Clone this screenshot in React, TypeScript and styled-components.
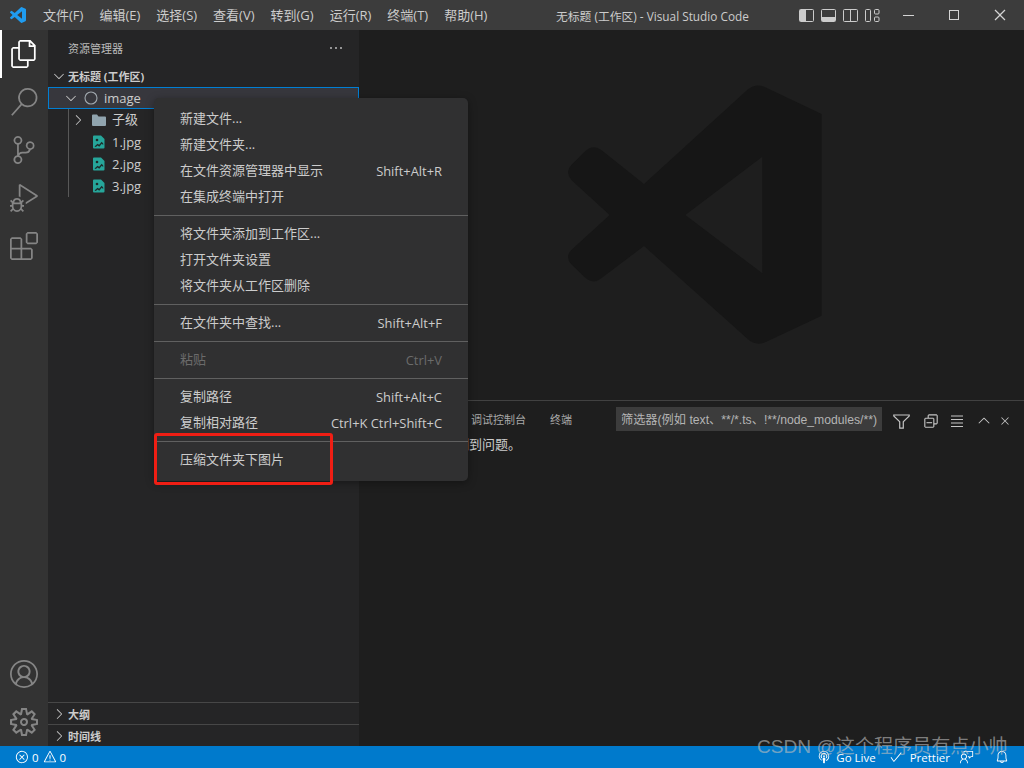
import React from "react";
import styled, { createGlobalStyle } from "styled-components";
import {
  VscAccount,
  VscBell,
  VscBroadcast,
  VscCheck,
  VscChevronDown,
  VscChevronRight,
  VscChevronUp,
  VscChromeClose,
  VscChromeMaximize,
  VscChromeMinimize,
  VscClose,
  VscCollapseAll,
  VscDebugAlt,
  VscEllipsis,
  VscError,
  VscExtensions,
  VscFeedback,
  VscFiles,
  VscFilter,
  VscSearch,
  VscSettingsGear,
  VscSourceControl,
  VscWarning,
} from "react-icons/vsc";

const FONT = `"Open Sans", "Noto Sans CJK SC", sans-serif`;

const Global = createGlobalStyle`
  html, body { margin: 0; padding: 0; height: 100%; background: #1e1e1e; }
  #root { height: 100%; }
  * { box-sizing: border-box; }
`;

const Window = styled.div`
  position: relative;
  width: 1024px;
  height: 768px;
  display: flex;
  flex-direction: column;
  overflow: hidden;
  font-family: ${FONT};
  font-size: 13px;
  color: #cccccc;
`;

const TitleBar = styled.header`
  height: 30px;
  flex: none;
  display: flex;
  align-items: center;
  background: #3c3c3c;
`;

const AppLogo = styled.svg`
  width: 16px;
  height: 16px;
  margin: 0 17px 0 10px;
  flex: none;
`;

const MenuBar = styled.nav`
  width: 513px;
  display: flex;
  gap: 16px;
  flex: none;
`;

const MenuLabel = styled.span`
  font-size: 13px;
  line-height: 30px;
  white-space: nowrap;
`;

const WindowTitle = styled.div`
  width: 243px;
  flex: none;
  font-size: 11.8px;
  white-space: nowrap;
  color: #cccccc;
`;

const LayoutIcons = styled.div`
  display: flex;
  gap: 7px;
  width: 86px;
  flex: none;
`;

const WinControls = styled.div`
  display: flex;
  align-items: center;
  flex: none;
  width: 139px;
  color: #d4d4d4;
`;

const WinButton = styled.span`
  width: 46px;
  display: flex;
  justify-content: center;
  font-size: 16px;
`;

const Main = styled.div`
  flex: 1;
  display: flex;
  min-height: 0;
`;

const ActivityBar = styled.aside`
  width: 48px;
  flex: none;
  display: flex;
  flex-direction: column;
  background: #333333;
`;

const ActivityItem = styled.div<{ $active?: boolean }>`
  height: 48px;
  display: flex;
  align-items: center;
  justify-content: center;
  font-size: 28px;
  color: ${(p) => (p.$active ? "#ffffff" : "#858585")};
  border-left: 2px solid ${(p) => (p.$active ? "#ffffff" : "transparent")};
  padding-right: 2px;
`;

const ActivitySpacer = styled.div`
  flex: 1;
`;

const SideBar = styled.aside`
  width: 311px;
  flex: none;
  display: flex;
  flex-direction: column;
  background: #252526;
`;

const SideHeader = styled.div`
  height: 35px;
  flex: none;
  display: flex;
  align-items: center;
  justify-content: space-between;
  padding: 0 15px 0 20px;
  font-size: 11px;
  color: #bbbbbb;
`;

const SectionHeader = styled.div<{ $ruled?: boolean }>`
  height: 22px;
  flex: none;
  display: flex;
  align-items: center;
  gap: 1px;
  padding-left: 3px;
  font-size: 11px;
  font-weight: 700;
  color: #cccccc;
  border-top: ${(p) => (p.$ruled ? "1px solid #474747" : "none")};
`;

const Tree = styled.div`
  position: relative;
  flex: 1;
`;

const TreeRow = styled.div<{ $depth: number; $selected?: boolean }>`
  height: 22px;
  display: flex;
  align-items: center;
  gap: 5px;
  padding-left: ${(p) => p.$depth}px;
  color: #cccccc;
  background: ${(p) => (p.$selected ? "#37373d" : "transparent")};
  outline: ${(p) => (p.$selected ? "1px solid #007fd4" : "none")};
  outline-offset: -1px;
`;

const IndentGuide = styled.div`
  position: absolute;
  left: 20px;
  top: 22px;
  width: 1px;
  height: 88px;
  background: #585858;
`;

const FileName = styled.span<{ $cjk?: boolean }>`
  font-size: 13px;
  padding-bottom: ${(p) => (p.$cjk ? "4px" : "0")};
`;

const Twistie = styled.span`
  display: flex;
  font-size: 16px;
  width: 16px;
  flex: none;
  color: #c5c5c5;
`;

const WorkArea = styled.div`
  flex: 1;
  min-width: 0;
  display: flex;
  flex-direction: column;
`;

const Editor = styled.div`
  flex: 1;
  display: flex;
  align-items: center;
  justify-content: center;
  background: #1e1e1e;
  padding-left: 7px;
`;

const Watermark = styled.svg`
  width: 255px;
  height: 260px;
`;

const Panel = styled.section`
  height: 346px;
  flex: none;
  display: flex;
  flex-direction: column;
  background: #1e1e1e;
  border-top: 1px solid #414141;
`;

const PanelHeader = styled.div`
  height: 35px;
  flex: none;
  display: flex;
  align-items: center;
  padding-left: 20px;
`;

const PanelTab = styled.span`
  font-size: 11px;
  color: #a8a8a8;
  margin-right: 24px;
  white-space: nowrap;
`;

const FilterBox = styled.div`
  position: absolute;
  left: 616px;
  top: 407px;
  width: 266px;
  height: 24px;
  display: flex;
  align-items: center;
  padding-left: 5px;
  background: #3c3c3c;
  color: #b4b4b4;
  font-family: "Liberation Sans", "Noto Sans CJK SC", sans-serif;
  font-size: 12.2px;
  white-space: nowrap;
`;

const PanelActions = styled.div`
  position: absolute;
  left: 884px;
  top: 410px;
  display: flex;
  align-items: center;
  font-size: 18px;
  color: #c5c5c5;
`;

const PanelAction = styled.span<{ $w: number; $size: number }>`
  width: ${(p) => p.$w}px;
  display: flex;
  justify-content: center;
  font-size: ${(p) => p.$size}px;
`;

const PanelMessage = styled.div`
  padding-left: 19px;
  margin-top: -2px;
  font-size: 13px;
  line-height: 20px;
  color: #cccccc;
`;

const StatusBar = styled.footer`
  height: 22px;
  flex: none;
  display: flex;
  align-items: center;
  justify-content: space-between;
  padding: 0 15px 0 15px;
  background: #007acc;
  color: #ffffff;
  font-size: 11.5px;
`;

const StatusGroup = styled.div`
  display: flex;
  align-items: center;
`;

const StatusItem = styled.span<{ $gap?: number; $after?: number }>`
  display: flex;
  align-items: center;
  gap: ${(p) => p.$gap ?? 3}px;
  margin-right: ${(p) => p.$after ?? 0}px;
  white-space: nowrap;
  svg {
    font-size: 14px;
  }
`;

const ContextMenu = styled.div`
  position: absolute;
  left: 154px;
  top: 98px;
  width: 314px;
  padding: 8px 0;
  background: #303031;
  border-radius: 5px;
  box-shadow: 0 2px 8px rgba(0, 0, 0, 0.36);
`;

const Item = styled.div<{ $disabled?: boolean }>`
  height: 26px;
  display: flex;
  align-items: center;
  justify-content: space-between;
  padding: 0 26px;
  font-size: 13px;
  color: ${(p) => (p.$disabled ? "#6b6b6b" : "#cccccc")};
`;

const ItemLabel = styled.span`
  padding-bottom: 4px;
`;

const Keys = styled.span`
  font-size: 12.9px;
  white-space: nowrap;
`;

const Separator = styled.div`
  height: 1px;
  margin: 5px 0;
  background: #606060;
`;

const Callout = styled.div`
  position: absolute;
  left: 154px;
  top: 433px;
  width: 179px;
  height: 52px;
  border: 3px solid #f01e14;
  border-radius: 3px;
`;

const Credit = styled.div`
  position: absolute;
  left: 757px;
  top: 735px;
  font-family: "Liberation Sans", "Noto Sans CJK SC", sans-serif;
  font-size: 19.1px;
  line-height: 24px;
  color: rgba(190, 190, 190, 0.62);
  white-space: nowrap;
`;

const LOGO =
  "M23.15 2.587L18.21.21a1.494 1.494 0 0 0-1.705.29l-9.46 8.63-4.12-3.128a.999.999 0 0 0-1.276.057L.327 7.261A1 1 0 0 0 .326 8.74L3.899 12 .326 15.26a1 1 0 0 0 .001 1.479L1.65 17.94a.999.999 0 0 0 1.276.057l4.12-3.128 9.46 8.63a1.492 1.492 0 0 0 1.704.29l4.942-2.377A1.5 1.5 0 0 0 24 20.06V3.939a1.5 1.5 0 0 0-.85-1.352zm-5.146 14.861L10.826 12l7.178-5.448v10.896z";

const WATERMARK =
  "M625 58Q650 38 680 53L846 132V737L680 815Q650 830 625 808L313 528L185 625Q160 645 135 622L95 583Q75 560 95 540L210 435L95 330Q75 305 95 285L135 245Q160 222 185 240L313 342ZM668 260L437 435L668 610Z";

const FolderIcon = () => (
  <svg width="16" height="16" viewBox="0 0 16 16" style={{ flex: "none" }}>
    <path
      d="M1 3.5A1 1 0 0 1 2 2.5h4l1.5 2H14a1 1 0 0 1 1 1V13a1 1 0 0 1-1 1H2a1 1 0 0 1-1-1z"
      fill="#90a4ae"
    />
  </svg>
);

const ImageIcon = () => (
  <svg width="16" height="16" viewBox="0 0 16 16" style={{ flex: "none" }}>
    <path d="M3 1.5h7l3.5 3.5v8.5a1 1 0 0 1-1 1H3a1 1 0 0 1-1-1v-11a1 1 0 0 1 1-1z" fill="#26a69a" />
    <circle cx="6" cy="6" r="1.3" fill="#1d2b2a" />
    <path d="M3.5 12.5l3-2.8 1.6 1.1 2.6-3 1.5 1.6v1.7l-1.5-1.3-2.4 2.9-1.8-1.2-1.6 1.5z" fill="#1d2b2a" />
  </svg>
);

const CircleIcon = () => (
  <svg width="16" height="16" viewBox="0 0 16 16" style={{ flex: "none", margin: "0 0 0 -1px" }}>
    <circle cx="8" cy="8" r="6" fill="none" stroke="#a0a8ae" strokeWidth="1.1" />
  </svg>
);

const LayoutGlyph = ({ kind }: { kind: "left" | "bottom" | "split" | "grid" }) => (
  <svg width="15" height="15" viewBox="0 0 15 15" fill="none" stroke="#cccccc" strokeWidth="1">
    {kind === "left" && (
      <>
        <rect x="0.5" y="1.5" width="14" height="12" rx="1" />
        <rect x="1" y="2" width="6" height="11" fill="#cccccc" stroke="none" />
      </>
    )}
    {kind === "bottom" && (
      <>
        <rect x="0.5" y="1.5" width="14" height="12" rx="1" />
        <rect x="1" y="9" width="13" height="4" fill="#cccccc" stroke="none" />
      </>
    )}
    {kind === "split" && (
      <>
        <rect x="0.5" y="1.5" width="14" height="12" rx="1" />
        <path d="M7.5 2v11" />
      </>
    )}
    {kind === "grid" && (
      <>
        <rect x="0.5" y="1.5" width="5" height="12" rx="1" />
        <rect x="9.5" y="1.5" width="4.5" height="4.5" rx="1" />
        <rect x="9.5" y="9" width="4.5" height="4.5" rx="1" />
      </>
    )}
  </svg>
);

const ListLines = () => (
  <svg width="16" height="16" viewBox="0 0 16 16" fill="none" stroke="#c5c5c5" strokeWidth="1">
    <path d="M2 3h12M2 6.5h12M2 10h12M2 13.5h12" />
  </svg>
);

const menus = ["文件(F)", "编辑(E)", "选择(S)", "查看(V)", "转到(G)", "运行(R)", "终端(T)", "帮助(H)"];

type Entry = { label: string; keys?: string; disabled?: boolean };

const menuGroups: Entry[][] = [
  [
    { label: "新建文件..." },
    { label: "新建文件夹..." },
    { label: "在文件资源管理器中显示", keys: "Shift+Alt+R" },
    { label: "在集成终端中打开" },
  ],
  [
    { label: "将文件夹添加到工作区..." },
    { label: "打开文件夹设置" },
    { label: "将文件夹从工作区删除" },
  ],
  [{ label: "在文件夹中查找...", keys: "Shift+Alt+F" }],
  [{ label: "粘贴", keys: "Ctrl+V", disabled: true }],
  [
    { label: "复制路径", keys: "Shift+Alt+C" },
    { label: "复制相对路径", keys: "Ctrl+K Ctrl+Shift+C" },
  ],
  [{ label: "压缩文件夹下图片" }],
];

export default function App() {
  return (
    <Window>
      <Global />
      <TitleBar>
        <AppLogo viewBox="0 0 24 24">
          <path d={LOGO} fill="#1f9cf0" />
        </AppLogo>
        <MenuBar>
          {menus.map((m) => (
            <MenuLabel key={m}>{m}</MenuLabel>
          ))}
        </MenuBar>
        <WindowTitle>无标题 (工作区) - Visual Studio Code</WindowTitle>
        <LayoutIcons>
          <LayoutGlyph kind="left" />
          <LayoutGlyph kind="bottom" />
          <LayoutGlyph kind="split" />
          <LayoutGlyph kind="grid" />
        </LayoutIcons>
        <WinControls>
          <WinButton>
            <VscChromeMinimize />
          </WinButton>
          <WinButton>
            <VscChromeMaximize />
          </WinButton>
          <WinButton>
            <VscChromeClose />
          </WinButton>
        </WinControls>
      </TitleBar>

      <Main>
        <ActivityBar>
          <ActivityItem $active>
            <VscFiles />
          </ActivityItem>
          <ActivityItem>
            <VscSearch />
          </ActivityItem>
          <ActivityItem>
            <VscSourceControl />
          </ActivityItem>
          <ActivityItem>
            <VscDebugAlt />
          </ActivityItem>
          <ActivityItem>
            <VscExtensions />
          </ActivityItem>
          <ActivitySpacer />
          <ActivityItem>
            <VscAccount />
          </ActivityItem>
          <ActivityItem>
            <VscSettingsGear />
          </ActivityItem>
        </ActivityBar>

        <SideBar>
          <SideHeader>
            <span>资源管理器</span>
            <VscEllipsis size={16} />
          </SideHeader>
          <SectionHeader>
            <Twistie>
              <VscChevronDown />
            </Twistie>
            无标题 (工作区)
          </SectionHeader>
          <Tree>
            <TreeRow $depth={15} $selected>
              <Twistie>
                <VscChevronDown />
              </Twistie>
              <CircleIcon />
              <FileName>image</FileName>
            </TreeRow>
            <IndentGuide />
            <TreeRow $depth={22}>
              <Twistie>
                <VscChevronRight />
              </Twistie>
              <FolderIcon />
              <FileName $cjk>子级</FileName>
            </TreeRow>
            <TreeRow $depth={43}>
              <ImageIcon />
              <FileName>1.jpg</FileName>
            </TreeRow>
            <TreeRow $depth={43}>
              <ImageIcon />
              <FileName>2.jpg</FileName>
            </TreeRow>
            <TreeRow $depth={43}>
              <ImageIcon />
              <FileName>3.jpg</FileName>
            </TreeRow>
          </Tree>
          <SectionHeader $ruled>
            <Twistie>
              <VscChevronRight />
            </Twistie>
            大纲
          </SectionHeader>
          <SectionHeader $ruled>
            <Twistie>
              <VscChevronRight />
            </Twistie>
            时间线
          </SectionHeader>
        </SideBar>

        <WorkArea>
          <Editor>
            <Watermark viewBox="85 45 765 780" preserveAspectRatio="none">
              <path d={WATERMARK} fill="#161616" fillRule="evenodd" />
            </Watermark>
          </Editor>
          <Panel>
            <PanelHeader>
              <PanelTab>问题</PanelTab>
              <PanelTab>输出</PanelTab>
              <PanelTab>调试控制台</PanelTab>
              <PanelTab>终端</PanelTab>
            </PanelHeader>
            <PanelMessage>未在工作区检测到问题。</PanelMessage>
          </Panel>
        </WorkArea>
      </Main>

      <StatusBar>
        <StatusGroup>
          <StatusItem $after={4}>
            <VscError />0
          </StatusItem>
          <StatusItem>
            <VscWarning />0
          </StatusItem>
        </StatusGroup>
        <StatusGroup>
          <StatusItem $gap={5} $after={13}>
            <VscBroadcast />
            Go Live
          </StatusItem>
          <StatusItem $gap={7} $after={10}>
            <VscCheck />
            Prettier
          </StatusItem>
          <StatusItem $after={21}>
            <VscFeedback />
          </StatusItem>
          <StatusItem>
            <VscBell />
          </StatusItem>
        </StatusGroup>
      </StatusBar>

      <FilterBox>筛选器(例如 text、**/*.ts、!**/node_modules/**)</FilterBox>
      <PanelActions>
        <PanelAction $w={34} $size={19}>
          <VscFilter />
        </PanelAction>
        <PanelAction $w={26} $size={18}>
          <VscCollapseAll />
        </PanelAction>
        <PanelAction $w={26} $size={18}>
          <ListLines />
        </PanelAction>
        <PanelAction $w={28} $size={18}>
          <VscChevronUp />
        </PanelAction>
        <PanelAction $w={14} $size={22}>
          <VscClose />
        </PanelAction>
      </PanelActions>

      <ContextMenu>
        {menuGroups.map((group, i) => (
          <React.Fragment key={i}>
            {i > 0 && <Separator />}
            {group.map((entry) => (
              <Item key={entry.label} $disabled={entry.disabled}>
                <ItemLabel>{entry.label}</ItemLabel>
                {entry.keys && <Keys>{entry.keys}</Keys>}
              </Item>
            ))}
          </React.Fragment>
        ))}
      </ContextMenu>
      <Callout />
      <Credit>CSDN @这个程序员有点小帅</Credit>
    </Window>
  );
}
